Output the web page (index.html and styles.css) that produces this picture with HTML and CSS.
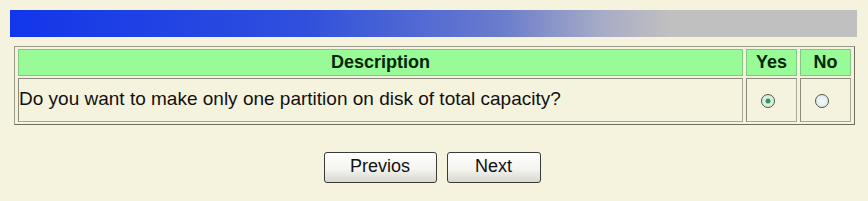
FILE: index.html
```html
<!DOCTYPE html>
<html lang="en">
<head>
  <meta charset="UTF-8">
  <title>Disk setup</title>
  <link rel="stylesheet" href="styles.css">
</head>
<body>

<div class="title-bar"></div>

<table class="question-table">
  <tr>
    <th class="col-desc">Description</th>
    <th class="col-opt">Yes</th>
    <th class="col-opt">No</th>
  </tr>
  <tr>
    <td class="desc">Do you want to make only one partition on disk of total capacity?</td>
    <td class="opt"><input type="radio" name="onepart" value="yes" checked></td>
    <td class="opt"><input type="radio" name="onepart" value="no"></td>
  </tr>
</table>

<div class="buttons">
  <button class="btn btn-prev">Previos</button>
  <button class="btn btn-next">Next</button>
</div>

</body>
</html>
```

FILE: styles.css
```css
body {
  background: #f5f3de;
  margin: 10px 11px 10px 10px;
  font-family: "Liberation Sans", Arial, sans-serif;
  color: #000;
}

.title-bar {
  height: 27px;
  background: linear-gradient(to right, #1236ea 0%, #3050dc 35%, #6a7ccc 58%, #a8acc6 70%, #c0c0c0 78%, #c0c0c0 100%);
}

.question-table {
  width: calc(100% - 6px);
  margin: 9px 3px 0 4px;
  border: 1px solid #9a9a8a;
  border-right-color: #6f6f60;
  border-bottom-color: #6f6f60;
  border-spacing: 3px 2px;
  border-collapse: separate;
}

th {
  background: #98fb98;
  color: #062606;
  font-size: 18px;
  font-weight: bold;
  height: 25px;
  padding: 0;
  border: 1px solid #82c882;
  text-align: center;
}

.col-opt {
  width: 49px;
}

td {
  height: 39px;
  border: 1px solid #a8a898;
  border-top-color: #8a8a7a;
  border-left-color: #8a8a7a;
  padding: 0;
  font-size: 19px;
}

td.desc {
  padding: 0 0 3px 0;
  color: #111;
}

td.opt {
  text-align: center;
}

td.opt input {
  appearance: none;
  margin: 0 7px 0 0;
  width: 14px;
  height: 14px;
  border: 1px solid #4a5a4a;
  border-radius: 50%;
  background: radial-gradient(circle, #f4f8f8, #dce6ea);
  vertical-align: middle;
  position: relative;
}

td.opt input:checked {
  background: radial-gradient(circle, #2f9a50 0, #2f9a50 2px, #dceee4 3px, #dceee4 100%);
}

.buttons {
  display: flex;
  justify-content: center;
  gap: 10px;
  margin-top: 27px;
  padding-right: 3px;
}

.btn {
  font-family: "Liberation Sans", Arial, sans-serif;
  font-size: 18px;
  height: 31px;
  border: 1px solid #3a3a3a;
  border-radius: 3px;
  background: linear-gradient(#ffffff, #f4f4f0 55%, #d8d8d0);
  color: #111;
  padding: 0 0 2px 0;
  cursor: pointer;
}

.btn-prev {
  width: 113px;
}

.btn-next {
  width: 94px;
}
```
